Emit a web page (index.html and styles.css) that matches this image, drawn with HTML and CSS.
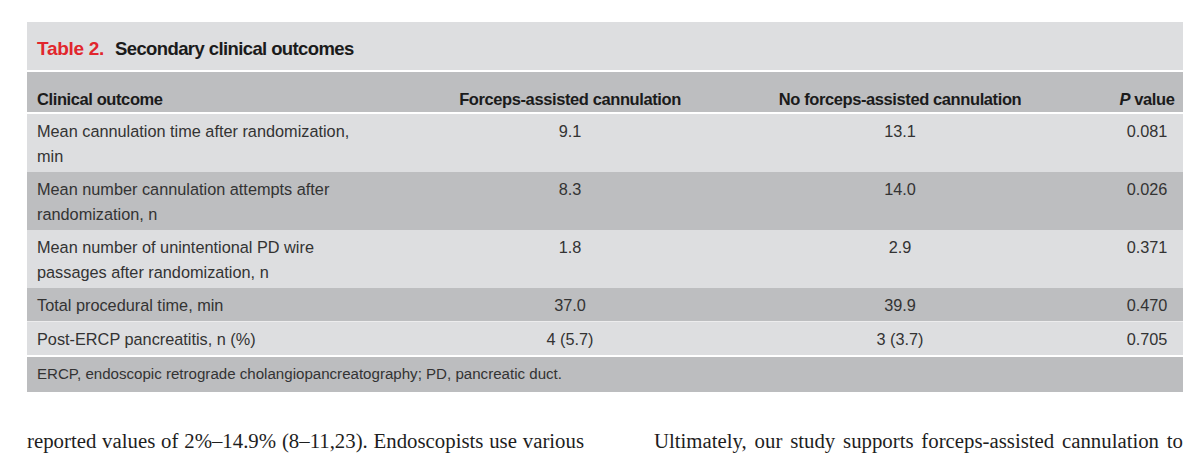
FILE: index.html
```html
<!DOCTYPE html>
<html lang="en">
<head>
<meta charset="utf-8">
<title>Table 2. Secondary clinical outcomes</title>
<link rel="stylesheet" href="styles.css">
</head>
<body>
<div class="page">
  <div class="table">
    <div class="caption"><span class="label">Table 2.</span>Secondary clinical outcomes</div>
    <div class="row head">
      <div class="c1">Clinical outcome</div>
      <div class="c2">Forceps-assisted cannulation</div>
      <div class="c3">No forceps-assisted cannulation</div>
      <div class="c4"><i>P</i> value</div>
    </div>
    <div class="row light first">
      <div class="c1">Mean cannulation time after randomization, min</div>
      <div class="c2">9.1</div>
      <div class="c3">13.1</div>
      <div class="c4">0.081</div>
    </div>
    <div class="row dark">
      <div class="c1">Mean number cannulation attempts after randomization, n</div>
      <div class="c2">8.3</div>
      <div class="c3">14.0</div>
      <div class="c4">0.026</div>
    </div>
    <div class="row light">
      <div class="c1">Mean number of unintentional PD wire passages after randomization, n</div>
      <div class="c2">1.8</div>
      <div class="c3">2.9</div>
      <div class="c4">0.371</div>
    </div>
    <div class="row dark">
      <div class="c1">Total procedural time, min</div>
      <div class="c2">37.0</div>
      <div class="c3">39.9</div>
      <div class="c4">0.470</div>
    </div>
    <div class="row light sep">
      <div class="c1">Post-ERCP pancreatitis, n (%)</div>
      <div class="c2">4 (5.7)</div>
      <div class="c3">3 (3.7)</div>
      <div class="c4">0.705</div>
    </div>
    <div class="foot">ERCP, endoscopic retrograde cholangiopancreatography; PD, pancreatic duct.</div>
  </div>
  <div class="text">
    <p class="col left">reported values of 2%–14.9% (8–11,23). Endoscopists use various</p>
    <p class="col right">Ultimately, our study supports forceps-assisted cannulation to</p>
  </div>
</div>
</body>
</html>
```

FILE: styles.css
```css
html, body {
  margin: 0;
  padding: 0;
  background: #ffffff;
}

.page {
  padding: 22px 0 0 27px;
  height: 435px;
  overflow: hidden;
}

.table {
  width: 1156px;
  font-family: "Liberation Sans", Arial, sans-serif;
  color: #333333;
}

.caption {
  background: #dddee0;
  padding: 16px 10px 10px 10px;
  line-height: 22px;
  height: 22px;
  font-size: 18.5px;
  letter-spacing: -0.6px;
  font-weight: bold;
  color: #1b1b1b;
}

.caption .label {
  color: #e1262d;
  font-size: 19px;
  letter-spacing: -0.3px;
  margin-right: 11px;
}

.row {
  display: grid;
  grid-template-columns: 378px 330px 330px 118px;
  font-size: 16.3px;
  line-height: 25px;
}

.row > div {
  padding: 5px 0 3px 0;
  text-align: center;
}

.row > .c1 {
  text-align: left;
  padding-left: 10px;
  padding-right: 38px;
}

.row > .c4 {
  padding-left: 46px;
}

.head {
  margin-top: 2px;
  background: #bdbec0;
  font-size: 16.5px;
  letter-spacing: -0.4px;
  font-weight: bold;
  line-height: 20px;
  color: #1b1b1b;
}

.head > div {
  padding: 17px 0 3px 0;
}

.head .c4 i {
  font-style: italic;
}

.first {
  margin-top: 2px;
}

.light {
  background: #dddee0;
}

.dark {
  background: #bdbec0;
}

.sep {
  border-top: 1px solid #ececed;
}

.foot {
  margin-top: 2px;
  background: #bcbdbf;
  font-size: 15.1px;
  line-height: 25px;
  padding: 4px 10px 6px 10px;
}

.text {
  display: flex;
  margin-top: 36px;
  font-family: "Liberation Serif", "Times New Roman", serif;
  font-size: 20.8px;
  line-height: 26px;
  color: #1e1e1e;
}

.col {
  margin: 0;
  text-align: justify;
  text-align-last: justify;
}

.left {
  width: 557px;
}

.right {
  width: 529px;
  margin-left: 70px;
}
```
